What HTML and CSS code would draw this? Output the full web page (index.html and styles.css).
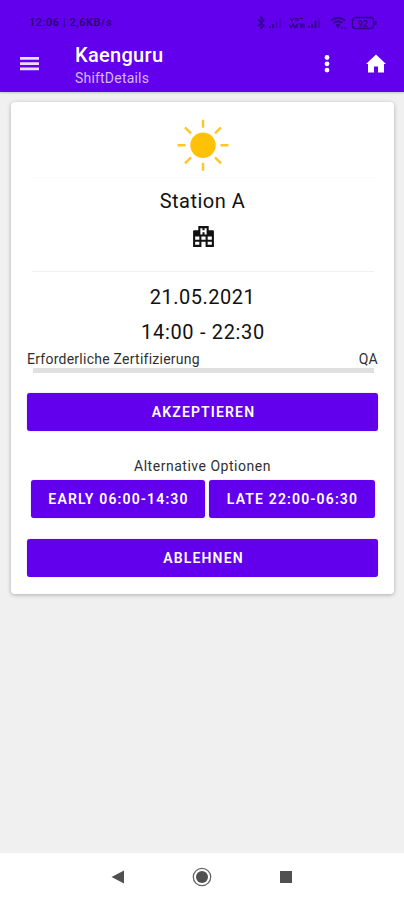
FILE: index.html
```html
<!DOCTYPE html>
<html lang="de">
<head>
<meta charset="utf-8">
<title>Kaenguru</title>
<link rel="stylesheet" href="styles.css">
</head>
<body>
<header class="header">
  <div class="status">
    <span class="status-text">12:06 | 2,6KB/s</span>
    <svg class="status-icons" width="124" height="18" viewBox="0 0 124 18" fill="none" stroke="currentColor">
      <path d="M2 5.500L8 11.500L5 14.500V3L8 6L2 12" stroke-width="1.300"/>
      <g stroke-width="2"><path d="M14 14v-2M17 14v-4"/><path d="M20.500 14V7M24 14V4" opacity=".4"/></g>
      <path d="M34 4l2 3 2-3M39 4.500h3v2h-3M44 4.500h3M33 10l2 4 2-4 2 4 2-4v4M42 10h3v4M46 14v-4h2v4" stroke-width="1.200"/>
      <g stroke-width="2"><path d="M53 14v-2M56 14v-4M59.500 14V7"/><path d="M63 14V4" opacity=".4"/></g>
      <path d="M75 6.500Q82 1 89 6.500M77.500 9Q82 5.500 86.500 9M80 11.500Q82 10 84 11.500" stroke-width="1.800"/>
      <path d="M81 12l1 1.500L83 12M86 13v2M89 13v2" stroke-width="1.300"/>
      <rect x="96.500" y="3.500" width="21" height="11" rx="3" stroke-width="1.500"/>
      <path d="M119.500 7v4" stroke-width="2"/>
      <text class="battery" x="107" y="12.500" text-anchor="middle">92</text>
    </svg>
  </div>
  <div class="toolbar">
    <svg class="menu" width="20" height="16" viewBox="0 0 20 16"><path d="M0 1h19v2.800H0zM0 6.200h19v2.800H0zM0 11.400h19v2.800H0z" fill="currentColor"/></svg>
    <div class="titles">
      <h1 class="title">Kaenguru</h1>
      <div class="subtitle">ShiftDetails</div>
    </div>
    <svg class="more" width="6" height="20" viewBox="0 0 6 20" fill="currentColor"><circle cx="3" cy="3.500" r="2.400"/><circle cx="3" cy="9.800" r="2.400"/><circle cx="3" cy="16.100" r="2.400"/></svg>
    <svg class="home" width="24" height="24" viewBox="0 0 24 24"><path d="M10 20.500v-6h4v6h6v-8.500h2L12 2.500 2 12h2v8.500z" fill="currentColor"/></svg>
  </div>
</header>
<main class="main">
  <section class="card">
    <svg class="sun" width="52" height="52" viewBox="0 0 52 52"><circle cx="26" cy="26.300" r="12.700" fill="#ffc107"/><path d="M26 .8v8M26 43.800v8M.5 26.300h8M43.500 26.300h8M8 8.300l6 6M38 38.300l6 6M44 8.300l-6 6M14 38.300l-6 6" stroke="#ffc629" stroke-width="2.400"/></svg>
    <div class="rule rule-faint"></div>
    <div class="headline">Station A</div>
    <svg class="hospital" width="25" height="25" viewBox="0 0 24 24"><path fill="currentColor" d="M2 22V7a1 1 0 0 1 1-1h4V2h10v4h4a1 1 0 0 1 1 1v15h-8v-5h-4v5H2M9 4v6h2V8h2v2h2V4h-2v2h-2V4H9M4 20h4v-3H4v3m0-5h4v-3H4v3m12 5h4v-3h-4v3m0-5h4v-3h-4v3m-6 0h4v-3h-4v3z"/></svg>
    <div class="rule"></div>
    <div class="headline date">21.05.2021</div>
    <div class="headline time">14:00 - 22:30</div>
    <div class="cert"><span>Erforderliche Zertifizierung</span><span>QA</span></div>
    <div class="bar"></div>
    <button class="btn accept">AKZEPTIEREN</button>
    <div class="alt-label">Alternative Optionen</div>
    <div class="options">
      <button class="btn early">EARLY 06:00-14:30</button>
      <button class="btn late">LATE 22:00-06:30</button>
    </div>
    <button class="btn reject">ABLEHNEN</button>
  </section>
</main>
<nav class="nav">
  <svg width="14" height="14" viewBox="0 0 14 14"><path d="M.5 7L13 .5v13z" fill="#505050"/></svg>
  <svg width="20" height="20" viewBox="0 0 20 20"><circle cx="10" cy="10" r="8.700" fill="none" stroke="#666" stroke-width="1.300"/><circle cx="10" cy="10" r="6" fill="#505050"/></svg>
  <svg width="14" height="14" viewBox="0 0 14 14"><path d="M1 1h12v12H1z" fill="#505050"/></svg>
</nav>
</body>
</html>
```
FILE: styles.css
```css
* { box-sizing: border-box; }
body {
  margin: 0;
  height: 900px;
  display: flex;
  flex-direction: column;
  background: #f0f0f0;
  font-family: Roboto, sans-serif;
  color: #111;
}
.header {
  height: 92px;
  background: #6200ee;
  color: #fff;
  box-shadow: 0 1px 2px rgba(0, 0, 0, .2);
}
.status {
  display: flex;
  justify-content: space-between;
  align-items: center;
  height: 40px;
  padding: 5px 24px 0 29px;
  color: #32008c;
}
.status-text { font-size: 11px; font-weight: 500; letter-spacing: .55px; white-space: nowrap; color: #28006f; }
.battery { font-size: 9px; font-weight: 700; fill: currentColor; stroke: none; }
.toolbar { display: flex; height: 52px; padding-left: 20px; }
.menu { margin-top: 16px; color: #e9dcfd; }
.titles { width: 241px; margin-left: 35px; }
.title { margin: 3px 0 0; font-size: 20px; line-height: 24px; font-weight: 500; letter-spacing: .3px; }
.subtitle { margin-top: 2px; font-size: 14px; line-height: 18px; letter-spacing: .2px; color: #d5b8fb; }
.more { margin-top: 14px; margin-left: 8px; }
.home { margin-top: 12px; margin-left: 34px; }
.main { flex: 1; padding: 10px 10px 0 11px; }
.card {
  display: flex;
  flex-direction: column;
  align-items: center;
  height: 492px;
  padding: 17px 16px 0;
  background: #fff;
  border-radius: 4px;
  box-shadow: 0 1px 4px rgba(0, 0, 0, .28);
}
.sun { display: block; flex: none; }
.rule { width: 342px; height: 1px; margin-top: 22px; background: #efefef; }
.rule-faint { margin-top: 6px; background: #fafafa; }
.headline { margin-top: 10px; height: 26px; font-size: 20px; line-height: 26px; letter-spacing: .5px; white-space: nowrap; }
.hospital { margin: 10px 0 0 1px; flex: none; }
.date { margin-top: 12px; }
.time { margin-top: 9px; padding-left: 1px; letter-spacing: .68px; }
.cert { display: flex; justify-content: space-between; width: 351px; height: 18px; margin-top: 5px; font-size: 14px; line-height: 18px; letter-spacing: .25px; color: #303030; }
.bar { width: 341px; height: 5px; margin-left: 1px; background: #e0e0e0; }
.btn {
  height: 38px;
  padding: 1px 0 0 2px;
  border: 0;
  border-radius: 3px;
  background: #6200ee;
  box-shadow: 0 0 1px rgba(98, 0, 238, .6);
  color: #fff;
  font: 600 14px/37px Roboto, sans-serif;
  letter-spacing: 1.15px;
  white-space: nowrap;
}
.accept, .reject { width: 351px; }
.accept { margin-top: 20px; }
.alt-label { margin-top: 26px; height: 18px; font-size: 14px; line-height: 18px; letter-spacing: .52px; color: #303030; }
.options { display: flex; gap: 4px; margin-top: 5px; }
.early { width: 174px; }
.late { width: 166px; }
.reject { margin-top: 21px; }
.nav {
  display: flex;
  justify-content: space-between;
  align-items: center;
  height: 47px;
  padding: 0 111px;
  background: #fff;
}
```
